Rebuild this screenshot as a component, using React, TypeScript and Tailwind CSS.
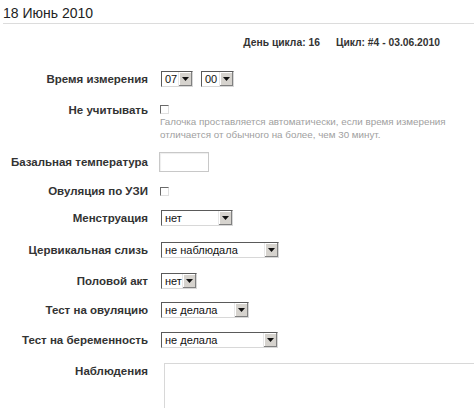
import React from 'react';

const Arrow: React.FC = () => (
  <span className="flex h-full w-[14px] items-center justify-center border-l border-[#e8e8e8] bg-[#d6d3ce] shadow-[inset_-1px_-1px_0_#808080,inset_1px_1px_0_#ffffff]">
    <svg width="7" height="4" viewBox="0 0 7 4">
      <path d="M0 0h7L3.5 4z" fill="#111" />
    </svg>
  </span>
);

const Select: React.FC<{ value: string; w: string }> = ({ value, w }) => (
  <div
    className={`flex h-[16px] ${w} items-stretch border border-t-[#5a5a5a] border-l-[#5a5a5a] border-b-[#d8d8d8] border-r-[#d8d8d8] bg-white`}
  >
    <span className="flex-1 pl-[3px] text-[11px] leading-[14px] text-[#111]">{value}</span>
    <Arrow />
  </div>
);

const Check: React.FC = () => (
  <span className="block h-[9px] w-[9px] border border-t-[#6a6a6a] border-l-[#6a6a6a] border-b-[#e0e0e0] border-r-[#e0e0e0] bg-white" />
);

const Label: React.FC<{ children: React.ReactNode; className?: string }> = ({ children, className = '' }) => (
  <div className={`w-[148px] shrink-0 text-right text-[11.5px] font-bold leading-[16px] text-[#333] ${className}`}>
    {children}
  </div>
);

const App: React.FC = () => {
  return (
    <div className="h-[408px] w-[474px] overflow-hidden bg-white font-['Liberation_Sans',Arial,sans-serif]">
      {/* HEADER */}
      <div className="ml-[3px] border-b border-[#dcdcdc] pt-[6px] pb-[2px]">
        <h1 className="text-[14px] leading-[15px] font-normal text-[#222]">18 Июнь 2010</h1>
      </div>

      <div className="mt-[12px] flex justify-end gap-[16px] pr-[34px] text-[10.3px] font-bold leading-[13px] text-[#333]">
        <span>День цикла: 16</span>
        <span>Цикл: #4 - 03.06.2010</span>
      </div>

      {/* FORM */}
      <div className="mt-[20px] flex flex-col">
        <div className="flex h-[20px] items-center gap-[13px]">
          <Label>Время измерения</Label>
          <div className="flex gap-[8px]">
            <Select value="07" w="w-[32px]" />
            <Select value="00" w="w-[33px]" />
          </div>
        </div>

        <div className="flex items-start gap-[12px]">
          <Label className="mt-[13px]">Не учитывать</Label>
          <div className="mt-[16px]">
            <Check />
            <p className="mt-[1px] whitespace-nowrap text-[9.8px] leading-[13px] text-[#a0a0a0]">
              Галочка проставляется автоматически, если время измерения
              <br />
              отличается от обычного на более, чем 30 минут.
            </p>
          </div>
        </div>

        <div className="mt-[10px] flex h-[22px] items-center gap-[11px]">
          <Label>Базальная температура</Label>
          <div className="h-[20px] w-[50px] border border-[#c8c8c8] bg-white shadow-[inset_1px_1px_1px_#eee]" />
        </div>

        <div className="mt-[8px] flex h-[20px] items-center gap-[12px]">
          <Label>Овуляция по УЗИ</Label>
          <Check />
        </div>

        <div className="mt-[7px] flex h-[20px] items-center gap-[13px]">
          <Label>Менструация</Label>
          <Select value="нет" w="w-[72px]" />
        </div>

        <div className="mt-[12px] flex h-[20px] items-center gap-[13px]">
          <Label>Цервикальная слизь</Label>
          <Select value="не наблюдала" w="w-[118px]" />
        </div>

        <div className="mt-[11px] flex h-[20px] items-center gap-[13px]">
          <Label>Половой акт</Label>
          <Select value="нет" w="w-[36px]" />
        </div>

        <div className="mt-[9px] flex h-[20px] items-center gap-[13px]">
          <Label>Тест на овуляцию</Label>
          <Select value="не делала" w="w-[88px]" />
        </div>

        <div className="mt-[10px] flex h-[20px] items-center gap-[13px]">
          <Label>Тест на беременность</Label>
          <Select value="не делала" w="w-[117px]" />
        </div>

        <div className="mt-[13px] flex items-start gap-[16px]">
          <Label>Наблюдения</Label>
          <div className="h-[80px] w-[330px] shrink-0 border border-[#d8d8d8] bg-white" />
        </div>
      </div>
    </div>
  );
};

export default App;
